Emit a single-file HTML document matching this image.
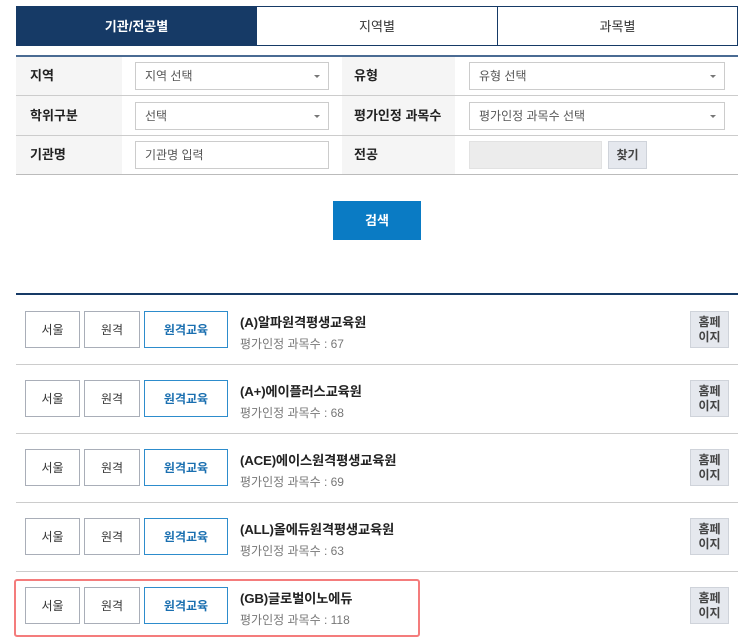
<!DOCTYPE html>
<html><head><meta charset="utf-8"><style>
*{margin:0;padding:0;box-sizing:border-box}
body{width:750px;height:638px;overflow:hidden;background:#fff;font-family:"Liberation Sans","Noto Sans CJK KR",sans-serif;color:#333;position:relative}
.a{position:absolute}
.tab{position:absolute;top:6px;height:40px;line-height:40px;text-align:center;font-size:13px;border:1px solid #163a66;color:#333}
.lbl{position:absolute;left:16px;width:106px;font-size:13px;font-weight:bold;color:#222;background:#f5f5f5;padding-left:14px}
.lbl2{position:absolute;left:342px;width:113px;font-size:13px;font-weight:bold;color:#222;background:#f5f5f5;padding-left:12px}
.inp{position:absolute;height:28px;border:1px solid #ccc;background:#fff;font-size:12px;color:#555;line-height:26px;padding-left:9px}
.arr{position:absolute;right:8px;top:12px;width:0;height:0;border-left:3px solid transparent;border-right:3px solid transparent;border-top:3px solid #777}
.hr{position:absolute;left:16px;width:722px;height:1px;background:#ccc}
.b{position:absolute;height:37px;line-height:36px;border:1px solid #a9aeb8;text-align:center;font-size:12px;color:#333;background:#fff}
.bb{border-color:#2d8ccc;color:#1a6fb0;font-weight:bold}
.t{position:absolute;left:240px;font-size:13.3px;font-weight:bold;color:#222;letter-spacing:-0.2px}
.s{position:absolute;left:240px;font-size:12px;color:#777}
.h{position:absolute;left:690px;width:39px;height:37px;background:#e5e8ee;border:1px solid #cfd3da;font-size:12px;font-weight:bold;color:#444;text-align:center;line-height:15px;padding-top:3px}
</style></head><body>
<div class="tab" style="left:16px;width:241px;background:#163a66;color:#fff;font-weight:bold">기관/전공별</div>
<div class="tab" style="left:256px;width:242px">지역별</div>
<div class="tab" style="left:497px;width:241px">과목별</div>

<div class="a" style="left:16px;top:55px;width:722px;height:2px;background:#4a6b93"></div>
<div class="lbl" style="top:57px;height:38px;line-height:38px">지역</div>
<div class="lbl" style="top:96px;height:39px;line-height:39px">학위구분</div>
<div class="lbl" style="top:136px;height:38px;line-height:38px">기관명</div>
<div class="lbl2" style="top:57px;height:38px;line-height:38px">유형</div>
<div class="lbl2" style="top:96px;height:39px;line-height:39px">평가인정 과목수</div>
<div class="lbl2" style="top:136px;height:38px;line-height:38px">전공</div>
<div class="hr" style="top:95px"></div>
<div class="hr" style="top:135px"></div>
<div class="hr" style="top:174px;background:#bbb"></div>

<div class="inp" style="left:135px;top:62px;width:194px">지역 선택<span class="arr"></span></div>
<div class="inp" style="left:135px;top:102px;width:194px">선택<span class="arr"></span></div>
<div class="inp" style="left:135px;top:141px;width:194px">기관명 입력</div>
<div class="inp" style="left:469px;top:62px;width:256px">유형 선택<span class="arr"></span></div>
<div class="inp" style="left:469px;top:102px;width:256px">평가인정 과목수 선택<span class="arr"></span></div>
<div class="inp" style="left:469px;top:141px;width:133px;background:#ececec;border-color:#e2e2e2"></div>
<div class="a" style="left:608px;top:141px;width:39px;height:28px;background:#e5e8ee;border:1px solid #cfd3da;font-size:12px;font-weight:bold;text-align:center;line-height:26px;color:#444">찾기</div>

<div class="a" style="left:333px;top:201px;width:88px;height:39px;background:#0a7bc4;color:#fff;font-size:13px;font-weight:bold;text-align:center;line-height:39px">검색</div>

<div class="a" style="left:16px;top:293px;width:722px;height:2px;background:#163a66"></div>

<div class="a" style="left:0;top:295px;width:750px;height:69px">
<div class="b" style="left:25px;top:16px;width:55px">서울</div>
<div class="b" style="left:84px;top:16px;width:56px">원격</div>
<div class="b bb" style="left:144px;top:16px;width:84px">원격교육</div>
<div class="t" style="top:17px">(A)알파원격평생교육원</div>
<div class="s" style="top:40px">평가인정 과목수 : 67</div>
<div class="h" style="top:16px">홈페<br>이지</div>
</div>
<div class="hr" style="top:364px"></div>
<div class="a" style="left:0;top:364px;width:750px;height:69px">
<div class="b" style="left:25px;top:16px;width:55px">서울</div>
<div class="b" style="left:84px;top:16px;width:56px">원격</div>
<div class="b bb" style="left:144px;top:16px;width:84px">원격교육</div>
<div class="t" style="top:17px">(A+)에이플러스교육원</div>
<div class="s" style="top:40px">평가인정 과목수 : 68</div>
<div class="h" style="top:16px">홈페<br>이지</div>
</div>
<div class="hr" style="top:433px"></div>
<div class="a" style="left:0;top:433px;width:750px;height:69px">
<div class="b" style="left:25px;top:16px;width:55px">서울</div>
<div class="b" style="left:84px;top:16px;width:56px">원격</div>
<div class="b bb" style="left:144px;top:16px;width:84px">원격교육</div>
<div class="t" style="top:17px">(ACE)에이스원격평생교육원</div>
<div class="s" style="top:40px">평가인정 과목수 : 69</div>
<div class="h" style="top:16px">홈페<br>이지</div>
</div>
<div class="hr" style="top:502px"></div>
<div class="a" style="left:0;top:502px;width:750px;height:69px">
<div class="b" style="left:25px;top:16px;width:55px">서울</div>
<div class="b" style="left:84px;top:16px;width:56px">원격</div>
<div class="b bb" style="left:144px;top:16px;width:84px">원격교육</div>
<div class="t" style="top:17px">(ALL)올에듀원격평생교육원</div>
<div class="s" style="top:40px">평가인정 과목수 : 63</div>
<div class="h" style="top:16px">홈페<br>이지</div>
</div>
<div class="hr" style="top:571px"></div>
<div class="a" style="left:0;top:571px;width:750px;height:69px">
<div class="b" style="left:25px;top:16px;width:55px">서울</div>
<div class="b" style="left:84px;top:16px;width:56px">원격</div>
<div class="b bb" style="left:144px;top:16px;width:84px">원격교육</div>
<div class="t" style="top:17px">(GB)글로벌이노에듀</div>
<div class="s" style="top:40px">평가인정 과목수 : 118</div>
<div class="h" style="top:16px">홈페<br>이지</div>
</div>
<div class="a" style="left:14px;top:579px;width:406px;height:58px;border:2px solid #f47c7c;border-radius:3px"></div>
</body></html>
